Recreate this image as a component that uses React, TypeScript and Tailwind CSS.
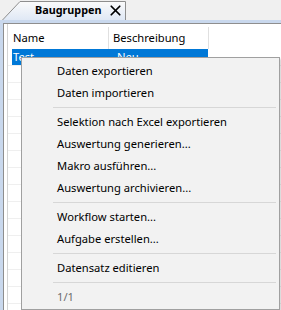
import { X } from "lucide-react";

const menu: (string | null)[] = [
  "Daten exportieren",
  "Daten importieren",
  null,
  "Selektion nach Excel exportieren",
  "Auswertung generieren...",
  "Makro ausführen...",
  "Auswertung archivieren...",
  null,
  "Workflow starten...",
  "Aufgabe erstellen...",
  null,
  "Datensatz editieren",
  null,
];

const font = { fontFamily: '"Noto Sans", "Segoe UI", sans-serif' };

export default function App() {
  const rows = Array.from({ length: 15 });
  return (
    <div
      className="relative w-[281px] h-[310px] overflow-hidden bg-[#f0f0f0] text-[11.2px] text-black"
      style={font}
    >
      {/* tab strip */}
      <div className="h-[20px] flex items-end">
        <div className="relative ml-[2px] h-[19px] w-[124px] flex items-center">
          <svg className="absolute inset-0" width="124" height="19" viewBox="0 0 124 19">
            <defs>
              <linearGradient id="tabfill" x1="0" y1="0" x2="0" y2="1">
                <stop offset="0" stopColor="#fbfbfb" />
                <stop offset="1" stopColor="#dfe8f5" />
              </linearGradient>
            </defs>
            <path d="M0.5 19 L18 0.5 L123.5 0.5 L123.5 19" fill="url(#tabfill)" stroke="#8e8e8e" />
          </svg>
          <span className="relative ml-[33px] font-bold text-[10.8px] leading-none">Baugruppen</span>
          <X className="relative ml-[6px] w-[17px] h-[17px]" strokeWidth={2.4} />
        </div>
      </div>
      {/* panel frame */}
      <div className="bg-[#c9d8ed] pt-[3px] pl-[3px] h-[290px]">
        <div className="h-full border-t border-l border-[#8e8e8e] bg-white pl-[3px]">
          <div className="h-full border-l border-[#d4d4d4]">
            <div className="flex h-[25px] items-center pt-[3px]">
              <div className="w-[100px] pl-[5px]">Name</div>
              <div className="w-[100px] h-full border-l border-[#e0e0e0] flex items-center pl-[4px]">
                Beschreibung
              </div>
              <div className="h-full border-l border-[#e0e0e0]" />
            </div>
            {rows.map((_, i) => (
              <div key={i} className="flex h-[17px] border-b border-[#efefef] items-center">
                {i === 0 ? (
                  <div className="ml-[4px] w-[196px] h-full flex items-center bg-[#0078d7] text-white">
                    <span className="w-[100px] pl-[1px]">Test</span>
                    <span className="pl-[5px]">Neu</span>
                  </div>
                ) : null}
              </div>
            ))}
          </div>
        </div>
      </div>
      {/* context menu */}
      <div className="absolute left-[21px] top-[57px] w-[259px] h-[253px] bg-[#f2f2f2] border border-[#a0a0a0] pt-[2px] pl-[2px] pr-[2px] shadow-[2px_2px_2px_rgba(0,0,0,0.15)]">
        {menu.map((m, i) =>
          m === null ? (
            <div key={i} className="h-[7px] flex items-center pl-[29px] pr-[1px]">
              <div className="h-px w-full bg-[#d7d7d7]" />
            </div>
          ) : (
            <div key={i} className="h-[22px] flex items-center pl-[33px]">
              {m}
            </div>
          )
        )}
        <div className="h-[22px] flex items-center pl-[33px] text-[#6d6d6d]">1/1</div>
      </div>
    </div>
  );
}
